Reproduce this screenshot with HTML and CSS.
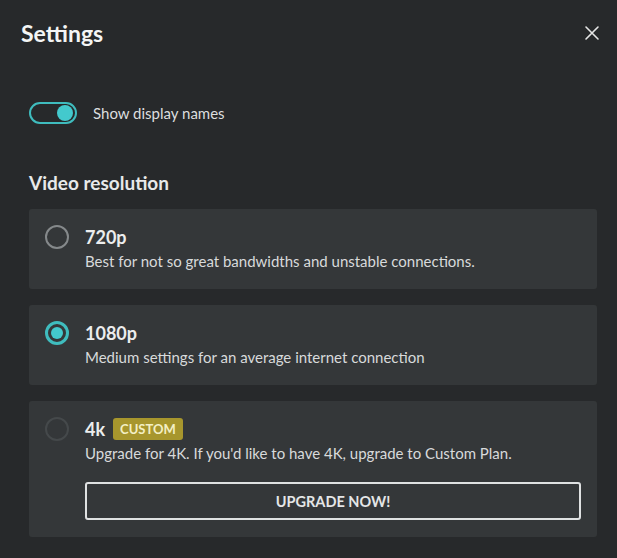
FILE: index.html
```html
<!DOCTYPE html>
<html>
	<head>
		<meta charset="UTF-8">
		<title>Settings</title>
		<link rel="stylesheet" href="styles.css">
	</head>
	<body>
		<div class="settings">
			<div class="header">
				<h1>Settings</h1>
				<button class="close" aria-label="Close">
					<svg width="16" height="16" viewBox="0 0 16 16"><path d="M2 2L14 14M14 2L2 14" stroke="#e6e6e6" stroke-width="1.6" stroke-linecap="round"/></svg>
				</button>
			</div>

			<label class="switch-row">
				<span class="switch on"><span class="knob"></span></span>
				<span>Show display names</span>
			</label>

			<h2>Video resolution</h2>

			<div class="options">
				<div class="option">
					<span class="radio"></span>
					<div class="option-body">
						<div class="option-title">720p</div>
						<div class="option-desc">Best for not so great bandwidths and unstable connections.</div>
					</div>
				</div>
				<div class="option">
					<span class="radio checked"></span>
					<div class="option-body">
						<div class="option-title">1080p</div>
						<div class="option-desc">Medium settings for an average internet connection</div>
					</div>
				</div>
				<div class="option">
					<span class="radio disabled"></span>
					<div class="option-body">
						<div class="option-title">4k <span class="badge">CUSTOM</span></div>
						<div class="option-desc">Upgrade for 4K. If you'd like to have 4K, upgrade to Custom Plan.</div>
						<button class="upgrade">UPGRADE NOW!</button>
					</div>
				</div>
			</div>
		</div>
	</body>
</html>
```

FILE: styles.css
```css
*{
	margin: 0;
	padding: 0;
	box-sizing: border-box;
}
body{
	background: #27292b;
	color: #e4e6e7;
	font-family: Lato, "Noto Sans", sans-serif;
	width: 617px;
	height: 558px;
	overflow: hidden;
}
.settings{
	padding: 20px 20px 0 29px;
}
.header{
	display: flex;
	align-items: center;
	justify-content: space-between;
	margin-left: -8px;
	margin-right: -3px;
	height: 26px;
}
h1{
	font-size: 23px;
	font-weight: 700;
	color: #f4f5f5;
}
.close{
	background: none;
	border: 0;
	width: 16px;
	height: 16px;
	display: flex;
}
.switch-row{
	display: flex;
	align-items: center;
	gap: 16px;
	margin-top: 56px;
	font-size: 15px;
	color: #dcdedf;
}
.switch{
	width: 48px;
	height: 22px;
	border: 2px solid #3fbcbe;
	border-radius: 11px;
	display: flex;
	align-items: center;
	justify-content: flex-end;
	padding: 0 2px;
}
.knob{
	width: 16px;
	height: 16px;
	border-radius: 50%;
	background: #43c9cd;
}
h2{
	font-size: 19px;
	font-weight: 700;
	margin-top: 47px;
	color: #e8e9ea;
}
.options{
	display: flex;
	flex-direction: column;
	gap: 16px;
	margin-top: 15px;
}
.option{
	background: #343739;
	border-radius: 3px;
	display: flex;
	gap: 16px;
	padding: 16px;
	min-height: 80px;
}
.radio{
	flex: none;
	width: 24px;
	height: 24px;
	border-radius: 50%;
	border: 2px solid #85898b;
	display: flex;
	align-items: center;
	justify-content: center;
}
.radio.checked{
	border: 3px solid #3fbcbe;
}
.radio.checked::after{
	content: "";
	width: 12px;
	height: 12px;
	border-radius: 50%;
	background: #43c9cd;
}
.radio.disabled{
	border-color: #45494b;
}
.option-body{
	flex: 1;
}
.option-title{
	font-size: 18px;
	font-weight: 700;
	line-height: 24px;
	display: flex;
	align-items: center;
	gap: 8px;
	color: #eceded;
}
.option-desc{
	font-size: 15px;
	line-height: 24px;
	color: #d8dadb;
}
.badge{
	background: #a7962d;
	color: #f3efc4;
	font-size: 13px;
	font-weight: 700;
	border-radius: 3px;
	padding: 0 7px;
	line-height: 22px;
	height: 22px;
}
.upgrade{
	display: block;
	width: 100%;
	height: 38px;
	margin: 17px 0 1px;
	background: transparent;
	border: 2px solid #dfe1e2;
	border-radius: 3px;
	color: #e4e6e7;
	font-family: inherit;
	font-size: 14.5px;
	font-weight: 700;
}
```
